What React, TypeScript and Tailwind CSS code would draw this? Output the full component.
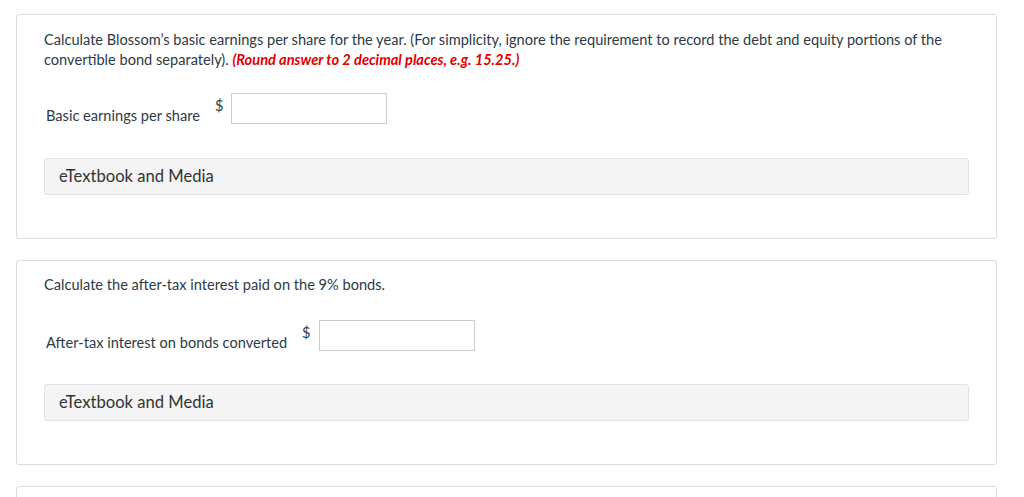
import React from 'react'

const font = { fontFamily: 'Lato, "Open Sans", sans-serif' }

const ETextbook = () => (
    <div className="h-[37px] flex items-center px-[14px] bg-[#f4f4f4] border border-[#e2e2e2] rounded-[3px] text-[16.6px] text-[#333333]">
        eTextbook and Media
    </div>
)

const AnswerRow = ({ label }: { label: string }) => (
    <div className="flex items-start pl-[2px]">
        <span className="mt-[13px] text-[14.6px] leading-[20px] text-[#2d3b45]">{label}</span>
        <span className="ml-[15px] mt-[3px] text-[14.6px] leading-[20px] text-[#2d3b45]">$</span>
        <input type="text" className="ml-[8px] w-[156px] h-[31px] border border-[#cccccc] bg-white outline-none" />
    </div>
)

const App = () => {
    return (
        <div className="min-h-[497px] bg-white pt-[14px] pl-[16px] pr-[27px]" style={font}>
            <section className="border border-[#dcdcdc] rounded-[3px] bg-white px-[27px] pt-[15px] pb-[43px]">
                <p className="text-[14.6px] leading-[20px] text-[#2d3b45]">
                    Calculate Blossom’s basic earnings per share for the year. (For simplicity, ignore the requirement to record the debt and equity portions of the convertible bond separately). <span className="italic font-bold text-[#e00000]">(Round answer to 2 decimal places, e.g. 15.25.)</span>
                </p>
                <div className="mt-[23px]">
                    <AnswerRow label="Basic earnings per share" />
                </div>
                <div className="mt-[32px]">
                    <ETextbook />
                </div>
            </section>
            <section className="mt-[21px] border border-[#dcdcdc] rounded-[3px] bg-white px-[27px] pt-[14px] pb-[43px]">
                <p className="text-[14.6px] leading-[20px] text-[#2d3b45]">
                    Calculate the after-tax interest paid on the 9% bonds.
                </p>
                <div className="mt-[25px]">
                    <AnswerRow label="After-tax interest on bonds converted" />
                </div>
                <div className="mt-[31px]">
                    <ETextbook />
                </div>
            </section>
            <section className="mt-[21px] h-[60px] border border-[#dcdcdc] rounded-[3px] bg-white" />
        </div>
    )
}

export default App
